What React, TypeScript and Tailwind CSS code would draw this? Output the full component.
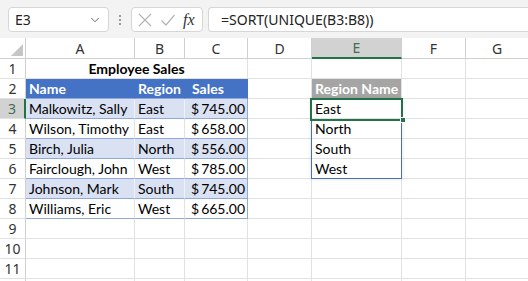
import { ChevronDown } from "lucide-react";

const cols = [26, 109, 50, 63, 64, 90, 64, 63];
const letters = ["A", "B", "C", "D", "E", "F", "G"];

const rows = [
  { name: "Malkowitz, Sally", region: "East", sales: "745.00" },
  { name: "Wilson, Timothy", region: "East", sales: "658.00" },
  { name: "Birch, Julia", region: "North", sales: "556.00" },
  { name: "Fairclough, John", region: "West", sales: "785.00" },
  { name: "Johnson, Mark", region: "South", sales: "745.00" },
  { name: "Williams, Eric", region: "West", sales: "665.00" },
];

const unique = ["East", "North", "South", "West"];

const cellFont = { fontFamily: "Lato, 'Liberation Sans', sans-serif" };
const uiFont = { fontFamily: "'Noto Sans', 'Open Sans', sans-serif" };

const Toolbar = () => (
  <div className="flex items-start h-[38px] pt-[7px] pl-[8px] bg-[#f3f3f3]" style={uiFont}>
    <div className="flex items-center justify-between w-[101px] h-[25px] bg-white border border-[#d6d6d6] rounded-[4px] pl-[6px] pr-[6px]">
      <span className="text-[14px] text-[#222]">E3</span>
      <ChevronDown size={14} strokeWidth={1.5} className="text-[#555]" />
    </div>
    <div className="w-[22px] h-[25px] flex flex-col items-center justify-center gap-[2px]">
      <span className="block w-[2px] h-[2px] bg-[#9a9a9a]" />
      <span className="block w-[2px] h-[2px] bg-[#9a9a9a]" />
      <span className="block w-[2px] h-[2px] bg-[#9a9a9a]" />
    </div>
    <div className="flex items-center w-[72px] h-[25px] bg-white border border-[#d6d6d6] rounded-[4px] pl-[5px]">
      <svg width="16" height="16" viewBox="0 0 16 16" className="mr-[7px]">
        <path d="M2 2 L14 14 M14 2 L2 14" stroke="#b5b5b5" strokeWidth="1.2" fill="none" />
      </svg>
      <svg width="16" height="16" viewBox="0 0 16 16" className="mr-[7px]">
        <path d="M1.5 8.5 L6 13 L14.5 3" stroke="#b5b5b5" strokeWidth="1.2" fill="none" />
      </svg>
      <span className="text-[16px] italic text-[#333] leading-none" style={{ fontFamily: "'Liberation Serif', serif" }}>
        fx
      </span>
    </div>
    <div className="ml-[5px] flex-1 h-[25px] bg-white border border-r-0 border-[#d6d6d6] rounded-l-[4px] flex items-center pl-[12px]">
      <span className="text-[14px] text-[#222]">=SORT(UNIQUE(B3:B8))</span>
    </div>
  </div>
);

const Cell = ({
  w,
  className = "",
  children,
}: {
  w: number;
  className?: string;
  children?: React.ReactNode;
}) => (
  <div
    className={`shrink-0 h-[20px] border-r border-b border-[#e1e1e1] flex items-center overflow-hidden whitespace-nowrap ${className}`}
    style={{ width: w }}
  >
    {children}
  </div>
);

const RowHead = ({ n, active }: { n?: number; active?: boolean }) => (
  <div
    className={`shrink-0 w-[26px] h-[20px] border-b border-[#e1e1e1] flex items-center justify-center text-[14px] ${
      active ? "bg-[#d2d2d2] border-r-2 border-r-[#217346] text-[#3f6f52]" : "border-r border-r-[#d0d0d0] text-[#333]"
    }`}
    style={uiFont}
  >
    {n}
  </div>
);

const Sheet = () => {
  const bodyRows = [];

  // row 1 - title
  bodyRows.push(
    <div key={1} className="flex">
      <RowHead n={1} />
      <div
        className="shrink-0 h-[20px] border-r border-b border-[#e1e1e1] flex items-center justify-center font-bold text-[14px] text-black"
        style={{ width: cols[1] + cols[2] + cols[3], ...cellFont }}
      >
        Employee Sales
      </div>
      {[4, 5, 6, 7].map((i) => (
        <Cell key={i} w={cols[i]} />
      ))}
    </div>
  );

  // row 2 - table headers
  bodyRows.push(
    <div key={2} className="flex">
      <RowHead n={2} />
      {["Name", "Region", "Sales"].map((h, i) => (
        <Cell
          key={h}
          w={cols[i + 1]}
          className={`bg-[#4472c4] text-white font-bold text-[14px] border-b-[#8ea9db] border-r-[#4472c4] ${
            i === 2 ? "pl-[7px]" : "pl-[3px]"
          }`}
        >
          <span style={cellFont}>{h}</span>
        </Cell>
      ))}
      <Cell w={cols[4]} />
      <Cell w={cols[5]} className="bg-[#a5a5a5] text-white font-bold text-[14px] pl-[3px]">
        <span style={cellFont}>Region Name</span>
      </Cell>
      <Cell w={cols[6]} />
      <Cell w={cols[7]} />
    </div>
  );

  rows.forEach((r, idx) => {
    const n = idx + 3;
    const band = idx % 2 === 0;
    const bg = band ? "bg-[#d9e1f2] border-r-[#eef2fa]" : "bg-white border-r-[#e1e1e1]";
    bodyRows.push(
      <div key={n} className="flex text-[14px] text-black" style={cellFont}>
        <RowHead n={n} active={n === 3} />
        <Cell w={cols[1]} className={`${bg} border-b-[#8ea9db] pl-[3px]`}>
          {r.name}
        </Cell>
        <Cell w={cols[2]} className={`${bg} border-b-[#8ea9db] pl-[3px]`}>
          {r.region}
        </Cell>
        <Cell w={cols[3]} className={`${band ? "bg-[#d9e1f2]" : "bg-white"} border-b-[#8ea9db] border-r-[#8ea9db] pl-[6px]`}>
          <span>$</span>
          <span className="ml-[2px]">{r.sales}</span>
        </Cell>
        <Cell w={cols[4]} />
        <Cell w={cols[5]} className="pl-[3px]">
          {unique[idx] ?? ""}
        </Cell>
        <Cell w={cols[6]} />
        <Cell w={cols[7]} />
      </div>
    );
  });

  [9, 10, 11].forEach((n) => {
    bodyRows.push(
      <div key={n} className="flex">
        <RowHead n={n} />
        {[1, 2, 3, 4, 5, 6, 7].map((i) => (
          <Cell key={i} w={cols[i]} />
        ))}
      </div>
    );
  });

  // partially visible row 12
  bodyRows.push(
    <div key={12} className="flex">
      <RowHead />
      {[1, 2, 3, 4, 5, 6, 7].map((i) => (
        <Cell key={i} w={cols[i]} />
      ))}
    </div>
  );

  return (
    <div className="relative bg-white">
      {/* column headers */}
      <div className="flex h-[21px]" style={uiFont}>
        <div className="shrink-0 w-[26px] h-[21px] border-r border-b border-[#d0d0d0] flex items-end justify-end pr-[2px] pb-[2px]">
          <svg width="12" height="12" viewBox="0 0 12 12">
            <path d="M12 0 L12 12 L0 12 Z" fill="#c6c6c6" />
          </svg>
        </div>
        {letters.map((l, i) => (
          <div
            key={l}
            className={`shrink-0 h-[21px] flex items-center justify-center text-[14px] border-r border-[#d0d0d0] ${
              l === "E" ? "bg-[#d2d2d2] border-b-2 border-b-[#217346] text-[#3f6f52]" : "border-b text-[#333]"
            }`}
            style={{ width: cols[i + 1] }}
          >
            {l}
          </div>
        ))}
      </div>
      {bodyRows}

      {/* spill range border */}
      <div className="absolute left-[311px] top-[61px] w-[91px] h-[80px] border border-[#4a6fb5] shadow-[0_0_4px_rgba(0,0,0,0.12)] pointer-events-none" />
      {/* active cell + fill handle */}
      <div className="absolute left-[310px] top-[60px] w-[93px] h-[23px] border-2 border-[#217346] pointer-events-none" />
      <div className="absolute left-[400px] top-[79px] w-[6px] h-[6px] bg-[#217346] border border-white pointer-events-none" />
    </div>
  );
};

export default function App() {
  return (
    <div className="w-[528px] h-[281px] overflow-hidden bg-white">
      <Toolbar />
      <Sheet />
    </div>
  );
}
